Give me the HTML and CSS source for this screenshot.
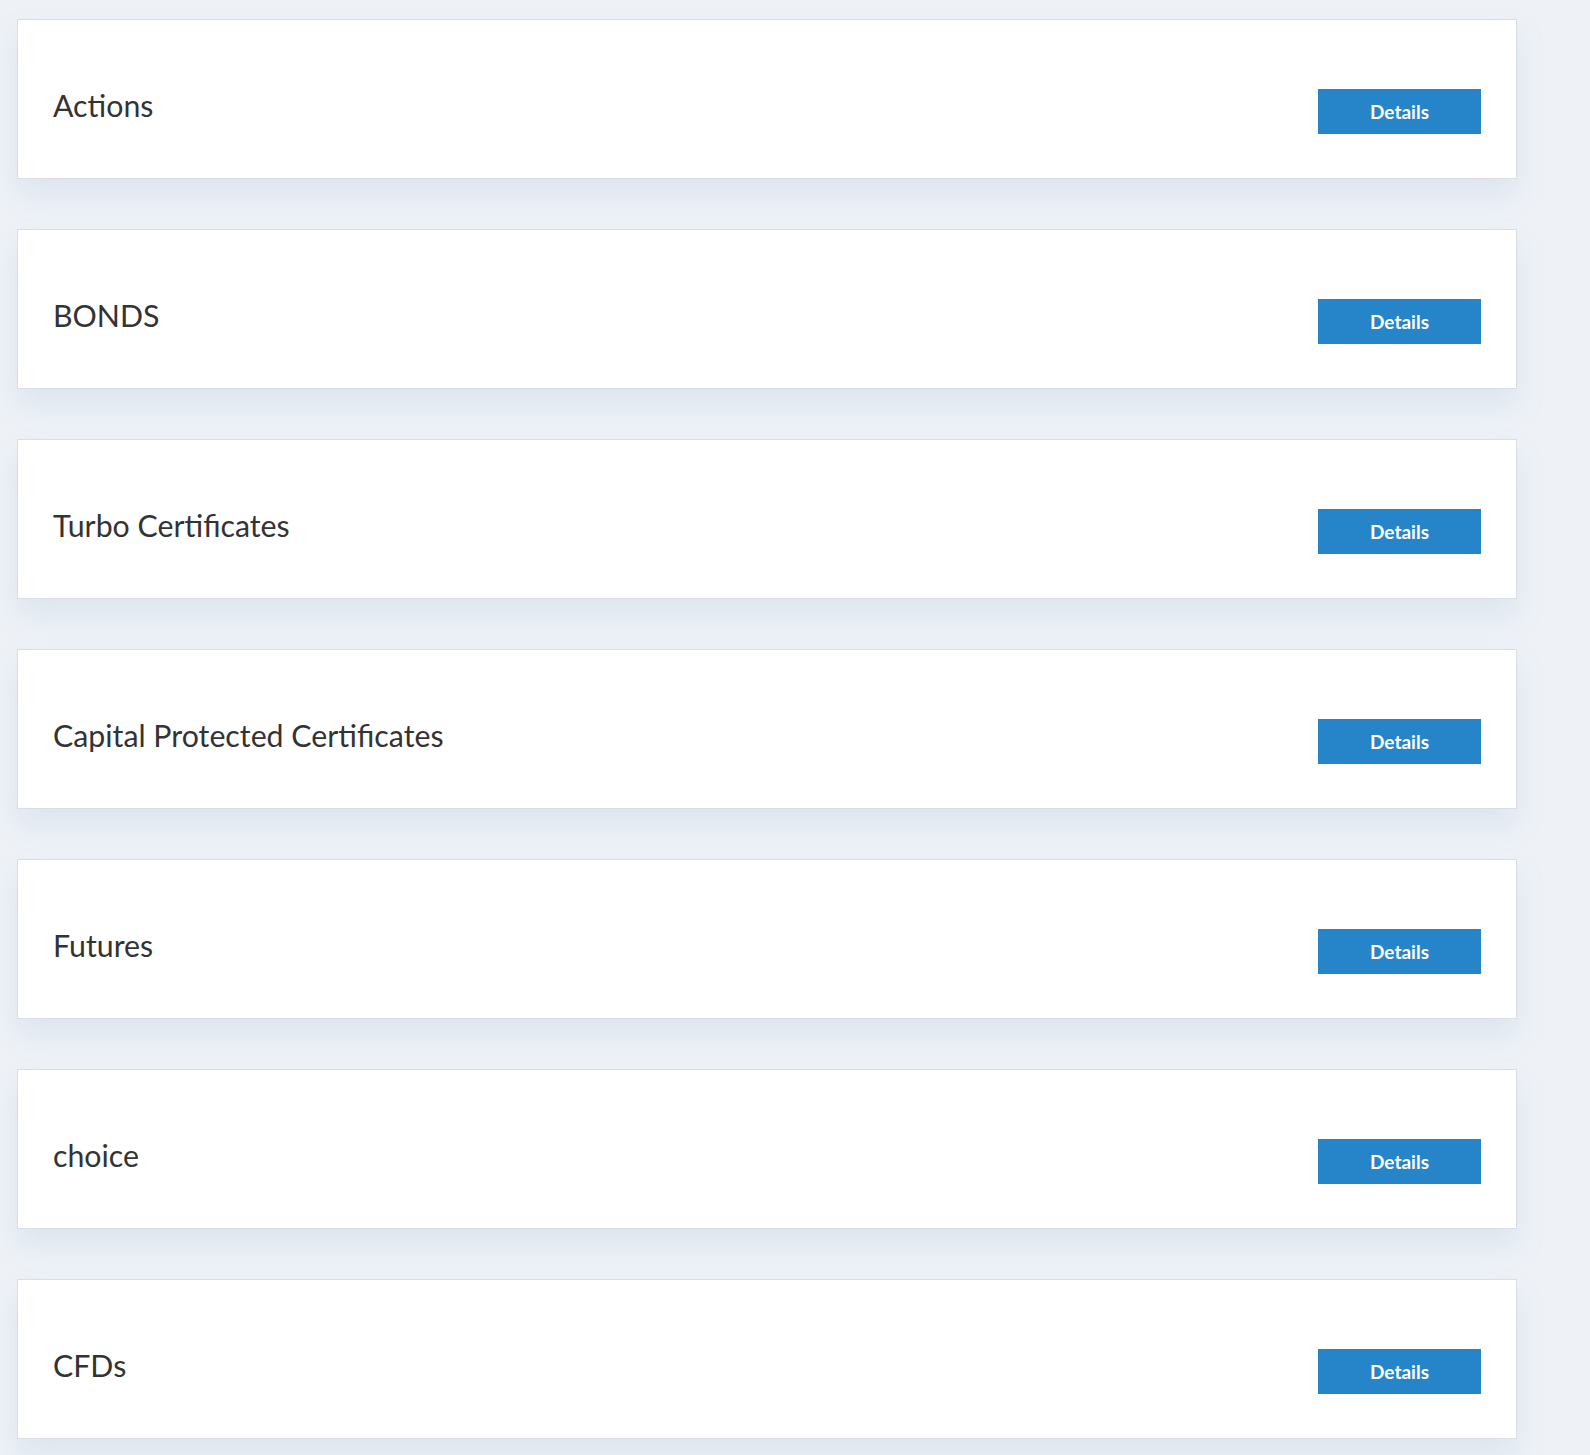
FILE: index.html
```html
<!DOCTYPE html>
<html lang="en">
<head>
<meta charset="utf-8">
<title>Products</title>
<link rel="stylesheet" href="styles.css">
</head>
<body>
<main class="list">
  <section class="card"><h3 class="card-title">Actions</h3><a class="btn" href="#">Details</a></section>
  <section class="card"><h3 class="card-title">BONDS</h3><a class="btn" href="#">Details</a></section>
  <section class="card"><h3 class="card-title">Turbo Certificates</h3><a class="btn" href="#">Details</a></section>
  <section class="card"><h3 class="card-title">Capital Protected Certificates</h3><a class="btn" href="#">Details</a></section>
  <section class="card"><h3 class="card-title">Futures</h3><a class="btn" href="#">Details</a></section>
  <section class="card"><h3 class="card-title">choice</h3><a class="btn" href="#">Details</a></section>
  <section class="card"><h3 class="card-title">CFDs</h3><a class="btn" href="#">Details</a></section>
</main>
</body>
</html>
```
FILE: styles.css
```css
html, body {
  margin: 0;
  padding: 0;
}
body {
  background: #eef2f7;
  font-family: Lato, "Open Sans", sans-serif;
  color: #333;
  min-height: 1455px;
}
.list {
  display: flex;
  flex-direction: column;
  gap: 50px;
  padding: 19px 0 0 17px;
  width: 1500px;
}
.card {
  display: flex;
  justify-content: space-between;
  align-items: flex-start;
  box-sizing: border-box;
  height: 160px;
  padding: 69px 35px 44px 35px;
  background: #fff;
  border: 1px solid #d9dee5;
  box-shadow: 0 16px 28px rgba(120, 155, 195, 0.15);
}
.card-title {
  margin: -2px 0 0 0;
  font-size: 30.3px;
  line-height: 36px;
  font-weight: 400;
  color: #333;
}
.btn {
  display: flex;
  align-items: center;
  justify-content: center;
  width: 163px;
  height: 45px;
  padding-bottom: 1px;
  box-sizing: border-box;
  background: #2585c8;
  color: #fff;
  text-decoration: none;
  font-size: 19px;
  font-weight: 700;
}
```
